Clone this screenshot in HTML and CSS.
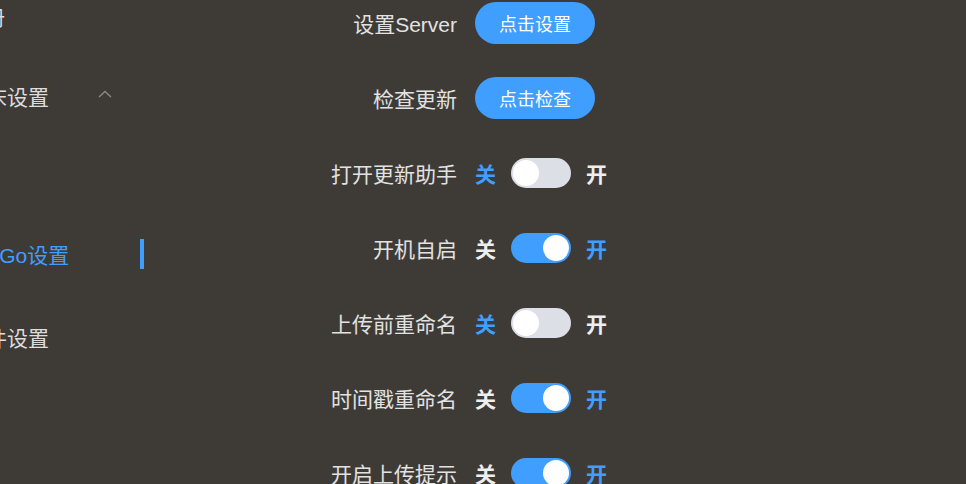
FILE: index.html
```html
<!DOCTYPE html>
<html lang="zh-CN">
<head>
<meta charset="utf-8">
<title>PicGo设置</title>
<link rel="stylesheet" href="styles.css">
</head>
<body>
<div class="app">
  <nav class="sidebar">
    <div class="menu-item menu-item--first"><span class="menu-label">相册</span></div>
    <div class="menu-item"><span class="menu-label">图床设置</span>
      <svg class="chevron" width="14" height="8" viewBox="0 0 14 8"><polyline points="1,7 7,1.5 13,7" fill="none" stroke="#8a8884" stroke-width="1.5"/></svg>
    </div>
    <div class="menu-item menu-item--empty"></div>
    <div class="menu-item menu-item--active"><span class="menu-label">PicGo设置</span></div>
    <div class="menu-item menu-item--last"><span class="menu-label">插件设置</span></div>
  </nav>
  <main class="main">
    <div class="form-row">
      <label class="form-label">设置Server</label>
      <div class="form-content"><button class="btn">点击设置</button></div>
    </div>
    <div class="form-row">
      <label class="form-label">检查更新</label>
      <div class="form-content"><button class="btn">点击检查</button></div>
    </div>
    <div class="form-row">
      <label class="form-label">打开更新助手</label>
      <div class="form-content switch-wrap">
        <span class="sw-text sw-text--active">关</span><span class="switch"><span class="knob"></span></span><span class="sw-text">开</span>
      </div>
    </div>
    <div class="form-row">
      <label class="form-label">开机自启</label>
      <div class="form-content switch-wrap">
        <span class="sw-text">关</span><span class="switch switch--on"><span class="knob"></span></span><span class="sw-text sw-text--active">开</span>
      </div>
    </div>
    <div class="form-row">
      <label class="form-label">上传前重命名</label>
      <div class="form-content switch-wrap">
        <span class="sw-text sw-text--active">关</span><span class="switch"><span class="knob"></span></span><span class="sw-text">开</span>
      </div>
    </div>
    <div class="form-row">
      <label class="form-label">时间戳重命名</label>
      <div class="form-content switch-wrap">
        <span class="sw-text">关</span><span class="switch switch--on"><span class="knob"></span></span><span class="sw-text sw-text--active">开</span>
      </div>
    </div>
    <div class="form-row">
      <label class="form-label">开启上传提示</label>
      <div class="form-content switch-wrap">
        <span class="sw-text">关</span><span class="switch switch--on"><span class="knob"></span></span><span class="sw-text sw-text--active">开</span>
      </div>
    </div>
  </main>
</div>
</body>
</html>
```

FILE: styles.css
```css
html, body {
  margin: 0;
  padding: 0;
  background: #3e3b37;
  overflow: hidden;
  height: 100%;
}
body {
  font-family: "Liberation Sans", "Noto Sans CJK SC", sans-serif;
  color: #dddddd;
}
.app {
  display: flex;
  width: 966px;
  height: 484px;
  overflow: hidden;
}
.sidebar {
  display: flex;
  flex-direction: column;
  width: 179px;
  margin-left: -35px;
  margin-top: -24px;
  flex-shrink: 0;
}
.menu-item {
  position: relative;
  display: flex;
  align-items: center;
  flex-shrink: 0;
  height: 80px;
  padding-right: 32px;
  font-size: 21px;
  color: #dddddd;
  white-space: nowrap;
}
.menu-item--first .menu-label { margin-left: -2px; }
.menu-item--empty { height: 78px; }
.menu-item--active { color: #409eff; }
.menu-item--active .menu-label { margin-left: 5px; }
.menu-item--active::after {
  content: "";
  position: absolute;
  right: 0;
  top: 25px;
  width: 4px;
  height: 30px;
  background: #409eff;
}
.menu-item--last { height: 86px; }
.chevron {
  margin-left: auto;
  margin-top: -4px;
}
.main {
  flex: 1;
  display: flex;
  flex-direction: column;
  gap: 33px;
  padding-top: 2px;
}
.form-row {
  display: flex;
  align-items: center;
  height: 42px;
  flex-shrink: 0;
}
.form-label {
  width: 313px;
  padding-right: 18px;
  text-align: right;
  font-size: 21px;
  color: #e2e2e2;
  flex-shrink: 0;
}
.form-content {
  display: flex;
  align-items: center;
}
.btn {
  height: 42px;
  padding: 0 24px;
  border: none;
  border-radius: 21px;
  background: #409eff;
  color: #ffffff;
  font-family: "Liberation Sans", "Noto Sans CJK SC", sans-serif;
  font-size: 18px;
  cursor: pointer;
}
.switch-wrap {
  gap: 15px;
}
.sw-text {
  font-size: 21px;
  font-weight: 700;
  color: #eeeeee;
}
.sw-text--active { color: #409eff; }
.switch {
  display: flex;
  align-items: center;
  width: 60px;
  height: 30px;
  box-sizing: border-box;
  padding: 2px;
  border-radius: 15px;
  background: #dcdfe6;
}
.switch--on {
  background: #409eff;
  justify-content: flex-end;
}
.knob {
  width: 26px;
  height: 26px;
  border-radius: 50%;
  background: #ffffff;
}
```
